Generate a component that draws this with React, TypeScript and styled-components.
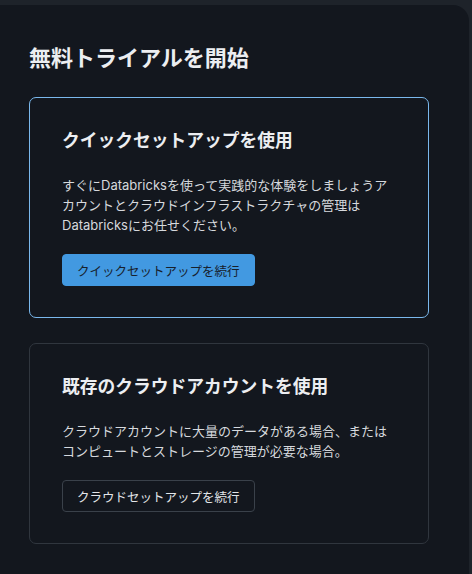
import styled, { createGlobalStyle } from 'styled-components';

const GlobalStyle = createGlobalStyle`
  html, body {
    margin: 0;
    padding: 0;
    background: #1e232a;
  }

  body {
    font-family: Inter, "Noto Sans CJK JP", sans-serif;
    color: #e6e8eb;
  }
`;

const Panel = styled.main`
  box-sizing: border-box;
  width: 469px;
  min-height: 569px;
  margin-top: 5px;
  padding: 39px 0 24px 29px;
  background: #13171e;
  border-top-right-radius: 16px;
  display: flex;
  flex-direction: column;
`;

const PageTitle = styled.h1`
  margin: 0 0 25px;
  font-size: 22px;
  line-height: 28px;
  font-weight: 700;
  color: #eceef1;
`;

const CardList = styled.div`
  display: flex;
  flex-direction: column;
  gap: 25px;
`;

const Card = styled.section<{ $active?: boolean }>`
  box-sizing: border-box;
  width: 400px;
  padding: 31px 32px 31px 32px;
  border: 1px solid ${({ $active }) => ($active ? '#7ab8ec' : '#30363e')};
  border-radius: 7px;
  display: flex;
  flex-direction: column;
  align-items: flex-start;
`;

const CardTitle = styled.h2`
  margin: 0 0 22px;
  font-size: 17.75px;
  line-height: 24px;
  font-weight: 700;
  color: #eceef1;
`;

const Description = styled.p`
  margin: 0 0 19px;
  font-size: 13px;
  line-height: 20px;
  color: #d6d9dd;
`;

const Button = styled.button<{ $primary?: boolean }>`
  box-sizing: border-box;
  height: 32px;
  padding: 0 14px;
  border-radius: 4px;
  font-family: inherit;
  font-size: 12.5px;
  cursor: pointer;
  border: 1px solid ${({ $primary }) => ($primary ? '#4299e1' : '#3a414a')};
  background: ${({ $primary }) => ($primary ? '#4299e1' : 'transparent')};
  color: ${({ $primary }) => ($primary ? '#17202b' : '#e3e6e9')};
`;

export default function App() {
  return (
    <>
      <GlobalStyle />
      <Panel>
        <PageTitle>無料トライアルを開始</PageTitle>
        <CardList>
          <Card $active>
            <CardTitle>クイックセットアップを使用</CardTitle>
            <Description>
              すぐにDatabricksを使って実践的な体験をしましょうア
              <br />
              カウントとクラウドインフラストラクチャの管理は
              <br />
              Databricksにお任せください。
            </Description>
            <Button $primary>クイックセットアップを続行</Button>
          </Card>
          <Card>
            <CardTitle>既存のクラウドアカウントを使用</CardTitle>
            <Description>
              クラウドアカウントに大量のデータがある場合、または
              <br />
              コンピュートとストレージの管理が必要な場合。
            </Description>
            <Button>クラウドセットアップを続行</Button>
          </Card>
        </CardList>
      </Panel>
    </>
  );
}
